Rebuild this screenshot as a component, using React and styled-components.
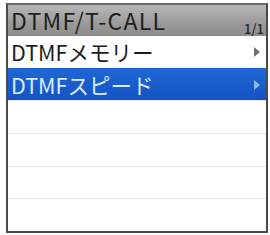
import styled, {createGlobalStyle} from 'styled-components';

const GlobalStyle = createGlobalStyle`
  body {
    margin: 0;
    background: #ffffff;
    font-family: "Noto Sans CJK JP", "Noto Sans", sans-serif;
  }
`;

const menuItems = [
  {id: 1, label: 'DTMFメモリー', arrow: true},
  {id: 2, label: 'DTMFスピード', arrow: true, selected: true},
  {id: 3, label: ''},
  {id: 4, label: ''},
  {id: 5, label: ''},
  {id: 6, label: ''},
];

const App = () => {
  return (
    <>
      <GlobalStyle />
      <Screen>
        <Header>
          <Title>DTMF/T-CALL</Title>
          <Page>1/1</Page>
        </Header>
        <List>
          {menuItems.map(item => (
            <Row key={item.id} $selected={item.selected}>
              <Label>{item.label}</Label>
              {item.arrow && <Arrow $selected={item.selected} />}
            </Row>
          ))}
        </List>
      </Screen>
    </>
  );
};

export default App;

const Screen = styled.div`
  box-sizing: border-box;
  margin: 3px 0 0 6px;
  width: 262px;
  height: 230px;
  border: 2px solid #4a4a4a;
  border-top-color: #6a6a6a;
  display: flex;
  flex-direction: column;
  background: #ffffff;
`;

const Header = styled.div`
  height: 31px;
  flex: none;
  display: flex;
  align-items: flex-end;
  justify-content: space-between;
  padding: 0 2px 0 3px;
  background: linear-gradient(#b8b8b8, #9a9a9a 60%, #8c8c8c);
  color: #1e1e1e;
`;

const Title = styled.span`
  font-size: 23px;
  line-height: 31px;
  letter-spacing: 1.3px;
`;

const Page = styled.span`
  font-size: 13px;
  line-height: 13px;
  font-weight: 500;
  margin-bottom: 1px;
  color: #262626;
`;

const List = styled.div`
  flex: 1;
  display: flex;
  flex-direction: column;
`;

const Row = styled.div`
  flex: 1;
  display: flex;
  align-items: center;
  justify-content: space-between;
  padding: 0 6px 0 3px;
  border-top: 1px solid ${p => (p.$selected ? '#1a5ccc' : '#e6e6e6')};
  background: ${p => (p.$selected ? 'linear-gradient(#1f66d6, #1553c2)' : '#ffffff')};
  color: ${p => (p.$selected ? '#d8ecff' : '#1e1e1e')};
  &:first-child {
    border-top: none;
  }
`;

const Label = styled.span`
  font-size: 21.5px;
  line-height: 30px;
`;

const Arrow = styled.span`
  width: 0;
  height: 0;
  border-top: 5px solid transparent;
  border-bottom: 5px solid transparent;
  border-left: 6px solid ${p => (p.$selected ? '#8fb8ec' : '#707070')};
`;
